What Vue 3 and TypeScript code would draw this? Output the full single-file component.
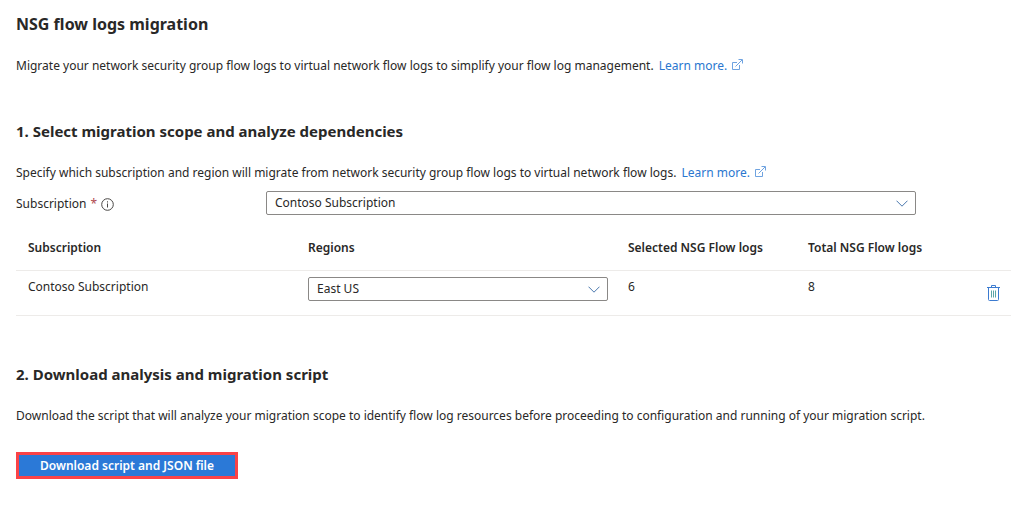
<script setup lang="ts">
import { ref } from 'vue'

interface ScopeRow {
  subscription: string
  region: string
  selected: number
  total: number
}

const subscription = ref('Contoso Subscription')
const rows = ref<ScopeRow[]>([
  { subscription: 'Contoso Subscription', region: 'East US', selected: 6, total: 8 },
])

function removeRow(index: number): void {
  rows.value.splice(index, 1)
}
</script>

<template>
  <main class="page">
    <section class="block">
      <h1 class="heading title">NSG flow logs migration</h1>
      <p class="text">
        Migrate your network security group flow logs to virtual network flow logs to simplify your flow log management.
        <a class="link" href="#">Learn more.<svg class="external" viewBox="0 0 11 11" aria-hidden="true"><path d="M5 3.5H.5v7h7V6M3.500 7.500L10 1M6.500.5h4v4" /></svg></a>
      </p>
    </section>

    <section class="block">
      <h2 class="heading">1. Select migration scope and analyze dependencies</h2>
      <p class="text">
        Specify which subscription and region will migrate from network security group flow logs to virtual network flow logs.
        <a class="link" href="#">Learn more.<svg class="external" viewBox="0 0 11 11" aria-hidden="true"><path d="M5 3.5H.5v7h7V6M3.500 7.500L10 1M6.500.5h4v4" /></svg></a>
      </p>

      <div class="field">
        <label class="label" for="subscription">
          Subscription <span class="required">*</span>
          <svg class="info" viewBox="0 0 13 13" aria-hidden="true">
            <circle cx="6.500" cy="6.500" r="5.800" />
            <path d="M6.500 5.500v4M6.500 3.300v1.200" />
          </svg>
        </label>
        <div class="dropdown wide">
          <select id="subscription" v-model="subscription" class="select">
            <option>Contoso Subscription</option>
          </select>
          <svg class="chevron" viewBox="0 0 12 7" aria-hidden="true"><path d="M.5.700L6 6.200 11.500.700" /></svg>
        </div>
      </div>

      <table class="table">
        <colgroup>
          <col class="col-subscription" />
          <col class="col-region" />
          <col class="col-count" />
          <col class="col-count" />
          <col />
        </colgroup>
        <thead>
          <tr>
            <th scope="col">Subscription</th>
            <th scope="col">Regions</th>
            <th scope="col">Selected NSG Flow logs</th>
            <th scope="col">Total NSG Flow logs</th>
            <td></td>
          </tr>
        </thead>
        <tbody>
          <tr v-for="(row, index) in rows" :key="row.subscription">
            <td>{{ row.subscription }}</td>
            <td>
              <div class="dropdown">
                <select v-model="row.region" class="select" aria-label="Regions">
                  <option>East US</option>
                </select>
                <svg class="chevron" viewBox="0 0 12 7" aria-hidden="true"><path d="M.5.700L6 6.200 11.500.700" /></svg>
              </div>
            </td>
            <td>{{ row.selected }}</td>
            <td>{{ row.total }}</td>
            <td class="action">
              <button class="remove" type="button" aria-label="Delete" @click="removeRow(index)">
                <svg class="trash" viewBox="0 0 13 16" aria-hidden="true">
                  <path class="bars" d="M4.500 5.500v7M6.500 5.500v7M8.500 5.500v7" />
                  <path d="M0 2.500h13M4.500 2.500v-2h4v2M1.500 2.500v12q0 1 1 1h8q1 0 1-1v-12" />
                </svg>
              </button>
            </td>
          </tr>
        </tbody>
      </table>
    </section>

    <section class="block">
      <h2 class="heading">2. Download analysis and migration script</h2>
      <p class="text">
        Download the script that will analyze your migration scope to identify flow log resources before proceeding to configuration and running of your migration script.
      </p>
      <button class="download" type="button">Download script and JSON file</button>
    </section>
  </main>
</template>

<style>
body {
  margin: 0;
  background: #fff;
}
</style>

<style scoped>
.page {
  padding: 14px 0 24px 16px;
  color: #292827;
  font-family: "Segoe UI", "Noto Sans", "Open Sans", sans-serif;
  font-size: 12px;
  line-height: 20px;
}

.block + .block {
  margin-top: 45px;
}

.heading {
  margin: 0;
  font-size: 15px;
  font-weight: 700;
  line-height: 20px;
}

.title {
  font-size: 16px;
}

.text {
  margin: 22px 0 0;
}

.link {
  margin-left: 2px;
  color: #2a77cf;
  text-decoration: none;
}

.external {
  width: 11px;
  height: 11px;
  margin-left: 5px;
  fill: none;
  stroke: #6fa3e0;
}

.field {
  display: flex;
  margin-top: 8px;
}

.label {
  display: flex;
  flex: none;
  align-items: center;
  gap: 4px;
  width: 250px;
  padding-top: 2px;
}

.required {
  color: #b04a50;
}

.info {
  width: 13px;
  height: 13px;
  fill: none;
  stroke: #484644;
}

.dropdown {
  position: relative;
}

.wide {
  flex: 0 1 650px;
}

.select {
  display: block;
  width: 100%;
  height: 24px;
  padding: 0 28px 0 8px;
  border: 1px solid #8a8886;
  border-radius: 2px;
  background: #fff;
  color: inherit;
  font: inherit;
  appearance: none;
}

.chevron {
  position: absolute;
  top: 9px;
  right: 8px;
  width: 12px;
  height: 7px;
  fill: none;
  stroke: #4a78ad;
  pointer-events: none;
}

.table {
  width: 100%;
  margin: 9px 0 48px;
  border-collapse: collapse;
  table-layout: fixed;
}

.col-subscription {
  width: 280px;
}

.col-region {
  width: 320px;
}

.col-count {
  width: 180px;
}

th,
td {
  padding: 6px 8px 14px 12px;
  border-bottom: 1px solid #edebe9;
  line-height: 20px;
  text-align: left;
  vertical-align: top;
  white-space: nowrap;
}

th {
  padding: 14px 0 12px 12px;
  font-weight: 600;
}

td.action {
  padding-right: 0;
  padding-left: 11px;
}

.remove {
  display: block;
  margin-top: 8px;
  padding: 0;
  border: 0;
  background: none;
}

.trash {
  display: block;
  width: 13px;
  height: 16px;
  fill: none;
  stroke: #3c7bd0;
}

.bars {
  stroke: #5ba6a8;
}

.download {
  display: block;
  height: 27px;
  margin-top: 26px;
  padding: 0 21px;
  border: 3px solid #fb4347;
  background: #2b79d7;
  color: #fff;
  font: inherit;
  font-weight: 600;
  line-height: 20px;
}
</style>
